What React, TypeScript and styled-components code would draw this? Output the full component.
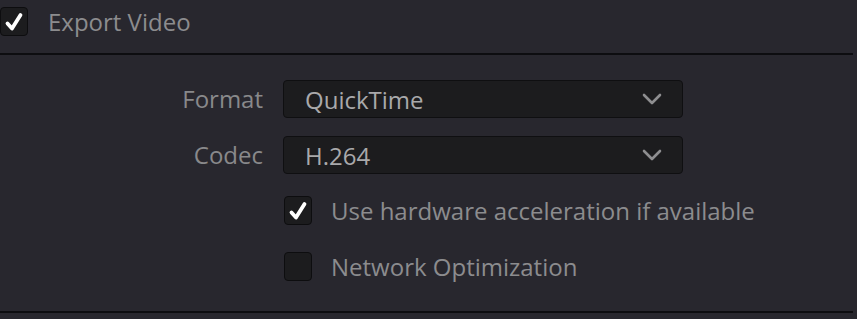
import * as React from 'react';
import styled, { createGlobalStyle } from 'styled-components';

const GlobalStyle = createGlobalStyle`
  html, body {
    margin: 0;
    padding: 0;
    background: #28272e;
  }
  body {
    font-family: 'Open Sans', 'Noto Sans', sans-serif;
    -webkit-font-smoothing: antialiased;
  }
`;

const Panel = styled.div`
  width: 853px;
  height: 319px;
  background: #28272e;
  display: flex;
  flex-direction: column;
`;

const Header = styled.div`
  height: 55px;
  flex-shrink: 0;
  display: flex;
  align-items: flex-start;
  padding-top: 7px;
  box-sizing: border-box;
  border-bottom: 2px solid #0d0d10;
`;

const HeaderLabel = styled.span`
  margin-left: 20px;
  font-size: 24px;
  line-height: 29px;
  color: #8c8c8e;
`;

const Body = styled.div`
  display: flex;
  flex-direction: column;
  padding-top: 25px;
  border-bottom: 2px solid #0d0d10;
  box-sizing: border-box;
  height: 258px;
`;

const FieldRow = styled.div`
  display: grid;
  grid-template-columns: 263px 400px;
  column-gap: 20px;
  align-items: center;
  margin-bottom: 18px;
`;

const FieldLabel = styled.label`
  text-align: right;
  font-size: 24px;
  line-height: 38px;
  color: #89898b;
`;

const SelectBox = styled.div`
  height: 38px;
  box-sizing: border-box;
  background: #1c1c1e;
  border: 1px solid #0f0f11;
  border-radius: 4px;
  display: flex;
  align-items: center;
  justify-content: space-between;
  padding: 0 20px 0 21px;
  font-size: 24px;
  color: #a9a9ab;
`;

const OptionRow = styled.div<{ $indent: number }>`
  display: flex;
  align-items: center;
  margin-left: ${p => p.$indent}px;
  margin-top: 4px;
  margin-bottom: 23px;
`;

const OptionLabel = styled.span`
  margin-left: 19px;
  font-size: 24px;
  line-height: 29px;
  color: #8c8c8e;
`;

const Box = styled.span`
  width: 28px;
  height: 29px;
  box-sizing: border-box;
  background: #1c1c1e;
  border: 1px solid #0d0d0f;
  border-radius: 4px;
  display: flex;
  align-items: center;
  justify-content: center;
  flex-shrink: 0;
`;

const Check: React.FC<{ checked: boolean }> = ({ checked }) => (
  <Box>
    {checked && (
      <svg width="20" height="20" viewBox="0 0 20 20">
        <path d="M3.5 11.5 L8 16.5 L16.5 3" fill="none" stroke="#fff" strokeWidth="3.8" strokeLinecap="round" strokeLinejoin="round" />
      </svg>
    )}
  </Box>
);

const Chevron = () => (
  <svg width="20" height="12" viewBox="0 0 20 12">
    <path d="M2 2 L10 10 L18 2" fill="none" stroke="#8e8e90" strokeWidth="2.6" strokeLinecap="round" strokeLinejoin="round" />
  </svg>
);

const fields = [
  { label: 'Format', value: 'QuickTime' },
  { label: 'Codec', value: 'H.264' },
];

const options = [
  { label: 'Use hardware acceleration if available', checked: true },
  { label: 'Network Optimization', checked: false },
];

export default function App() {
  return (
    <>
      <GlobalStyle />
      <Panel>
        <Header>
          <Check checked />
          <HeaderLabel>Export Video</HeaderLabel>
        </Header>
        <Body>
          {fields.map(f => (
            <FieldRow key={f.label}>
              <FieldLabel>{f.label}</FieldLabel>
              <SelectBox>
                <span>{f.value}</span>
                <Chevron />
              </SelectBox>
            </FieldRow>
          ))}
          {options.map(o => (
            <OptionRow key={o.label} $indent={284}>
              <Check checked={o.checked} />
              <OptionLabel>{o.label}</OptionLabel>
            </OptionRow>
          ))}
        </Body>
      </Panel>
    </>
  );
}
